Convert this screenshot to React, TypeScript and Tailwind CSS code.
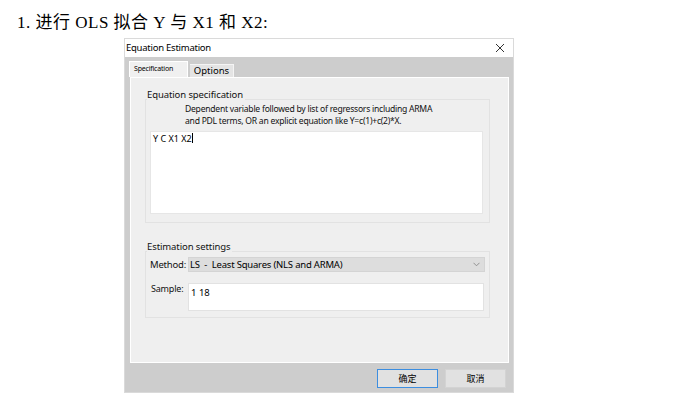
import React from "react";

const ui = { fontFamily: '"Noto Sans", "Noto Sans CJK SC", sans-serif' };

function CloseIcon() {
  return (
    <svg width="10" height="10" viewBox="0 0 10 10" className="block">
      <path d="M1 1 L9 9 M9 1 L1 9" stroke="#333" strokeWidth="1" />
    </svg>
  );
}

function Chevron() {
  return (
    <svg width="7" height="5" viewBox="0 0 7 5" className="block">
      <path d="M0.5 0.8 L3.5 3.8 L6.5 0.8" stroke="#888" strokeWidth="0.9" fill="none" />
    </svg>
  );
}

function GroupBox({ label, className, children }: { label: string; className: string; children: React.ReactNode }) {
  return (
    <div className={`relative border border-[#e2e2e2] ${className}`}>
      <span className="absolute -top-[12px] left-[1px] bg-[#efefef] pr-[2px] text-[9.5px] leading-[14px] text-[#111] tracking-[-0.1px]">
        {label}
      </span>
      {children}
    </div>
  );
}

export default function App() {
  return (
    <div className="w-[678px] h-[396px] bg-white overflow-hidden">
      <p
        className="pl-[17px] pt-[13px] text-[17px] leading-[20px] text-black tracking-[0.5px]"
        style={{ fontFamily: '"Liberation Serif", "Noto Sans CJK SC", serif' }}
      >
        1. 进行 OLS 拟合 Y 与 X1 和 X2:
      </p>

      <div className="ml-[124px] mt-[5px] w-[390px] h-[355px] border border-[#dadada] flex flex-col" style={ui}>
        {/* title bar */}
        <div className="h-[18px] bg-white flex items-center justify-between pl-[1px] pr-[8px]">
          <span className="text-[9.5px] text-black tracking-[-0.25px]">Equation Estimation</span>
          <CloseIcon />
        </div>

        <div className="flex-1 bg-[#cdcdcd] flex flex-col pl-[4px] pr-[7px]">
          {/* tabs */}
          <div className="flex items-end h-[20px] pt-[4px]">
            <div className="w-[59px] h-[16px] bg-[#f0f0f0] border-t border-l border-r border-white flex items-start pl-[4px] pt-[2px]">
              <span className="text-[7px] leading-[9px] text-black tracking-[-0.2px]">Specification</span>
            </div>
            <div className="ml-[2px] w-[44px] h-[13px] bg-[#e4e4e4] border-t border-r border-[#f4f4f4] flex items-center justify-center">
              <span className="text-[9.5px] leading-[12px] text-black">Options</span>
            </div>
          </div>

          {/* panel */}
          <div className="ml-[1px] w-[379px] h-[286px] bg-[#efefef] border border-white pl-[14px] pt-[21px]">
            <GroupBox label="Equation specification" className="w-[345px] h-[124px]">
              <div className="pl-[39px] pt-[3px] text-[8.6px] leading-[12px] text-[#111] tracking-[-0.25px]">
                <p>Dependent variable followed by list of regressors including ARMA</p>
                <p>and PDL terms, OR an explicit equation like Y=c(1)+c(2)*X.</p>
              </div>
              <div className="ml-[4px] mt-[4px] w-[333px] h-[83px] bg-white border border-[#e6e6e6] px-[2px] pt-[1px] text-[9px] leading-[12px] text-black">
                <span>Y C X1 X2</span>
                <span className="inline-block w-[1px] h-[10px] bg-black align-[-1px]" />
              </div>
            </GroupBox>

            <GroupBox label="Estimation settings" className="mt-[28px] w-[345px] h-[67px]">
              <div className="flex items-center pl-[4px] pt-[5px]">
                <span className="w-[38px] text-[9.5px] leading-[15px] text-[#111] tracking-[-0.2px]">Method:</span>
                <div className="w-[297px] h-[15px] bg-[#dddddd] border border-[#d4d4d4] flex items-center justify-between pl-[1px] pr-[4px]">
                  <span className="text-[9.5px] leading-[13px] text-black tracking-[-0.2px] whitespace-pre">LS  -  Least Squares (NLS and ARMA)</span>
                  <Chevron />
                </div>
              </div>
              <div className="flex items-start pl-[5px] pt-[11px]">
                <span className="w-[37px] text-[9px] leading-[12px] text-[#111] tracking-[-0.2px]">Sample:</span>
                <div className="w-[296px] h-[28px] bg-white border border-[#e2e2e2] pl-[2px] pt-[3px] text-[9.5px] leading-[12px] text-black">
                  1 18
                </div>
              </div>
            </GroupBox>
          </div>

          {/* buttons */}
          <div className="flex justify-end gap-[7px] pt-[6px]">
            <button className="w-[61px] h-[19px] bg-[#e1e1e1] border border-[#3d8ee0] text-[9px] text-black">
              确定
            </button>
            <button className="w-[61px] h-[19px] bg-[#e1e1e1] border border-[#d3d3d3] text-[9px] text-black">
              取消
            </button>
          </div>
        </div>
      </div>
    </div>
  );
}
